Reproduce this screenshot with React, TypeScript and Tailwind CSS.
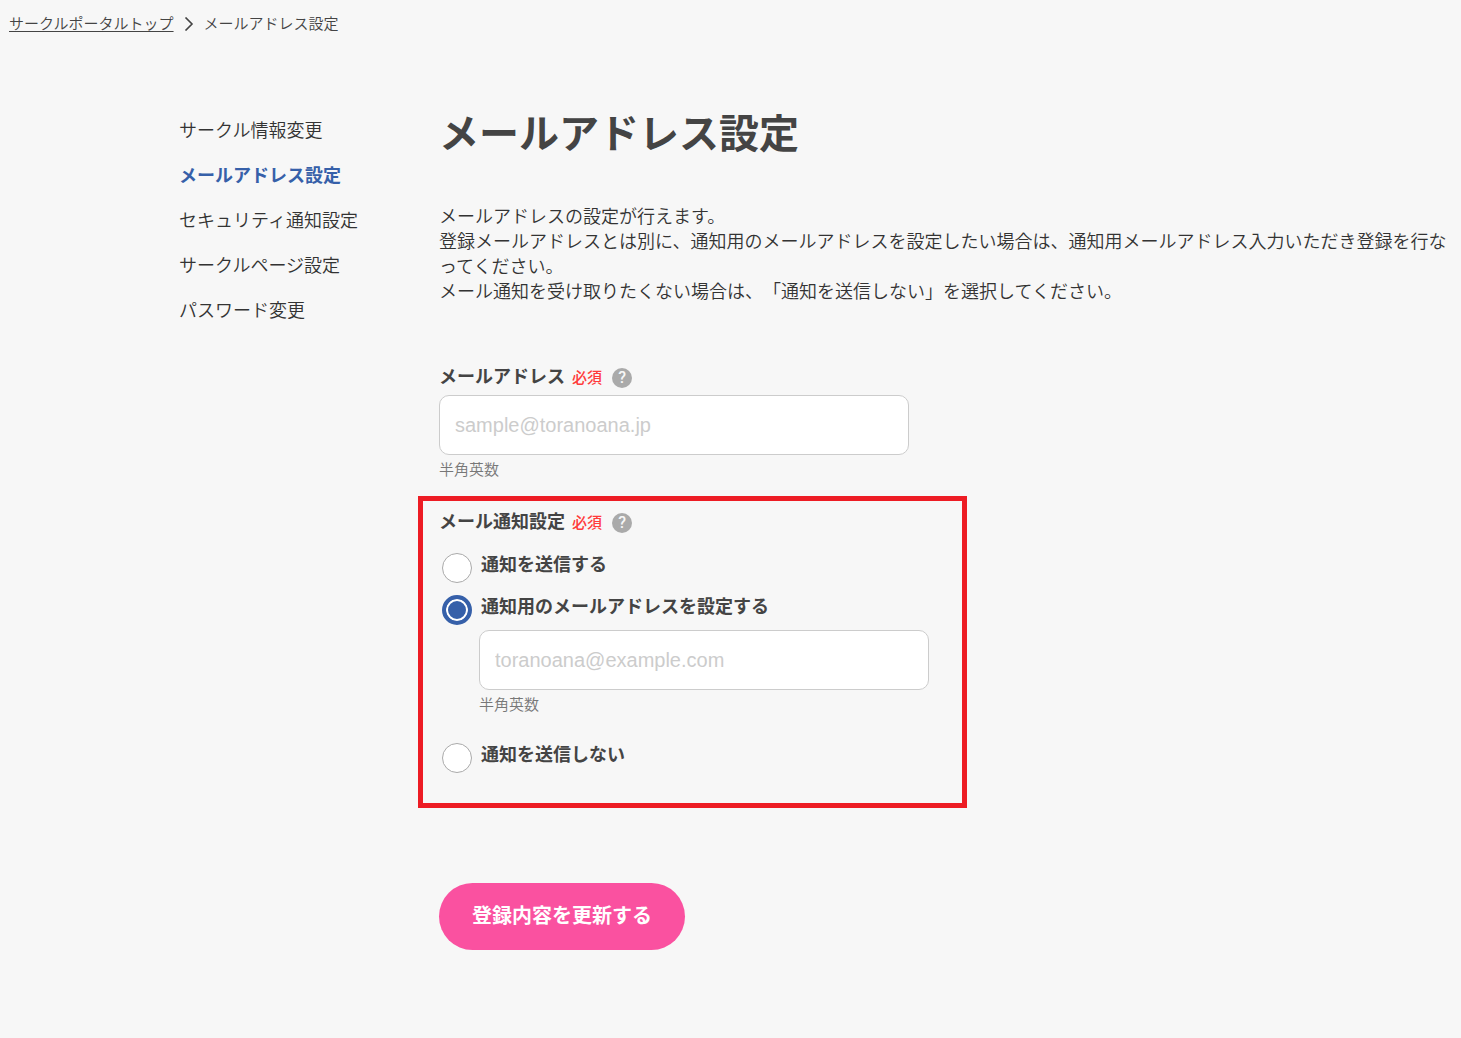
import { useId, useState } from 'react';
import type { ReactNode } from 'react';
import { clsx } from 'clsx';

const MENU_ITEMS = [
  'サークル情報変更',
  'メールアドレス設定',
  'セキュリティ通知設定',
  'サークルページ設定',
  'パスワード変更',
];

type NotifyMode = 'send' | 'custom' | 'none';

function Breadcrumb() {
  return (
    <nav aria-label="パンくずリスト" className="flex items-center px-[9px] pt-2 text-[15px] leading-[30px] text-[#444]">
      <a href="#top" className="underline underline-offset-2">サークルポータルトップ</a>
      <svg className="mx-[10px] mt-0.5" width="10" height="14" viewBox="0 0 10 14" fill="none" stroke="#444" strokeWidth="1.6" aria-hidden="true">
        <path d="M1.5 0.5 L8 7 L1.5 13.5" />
      </svg>
      <span>メールアドレス設定</span>
    </nav>
  );
}

function SideMenu({ current }: { current: string }) {
  return (
    <nav aria-label="設定メニュー" className="w-[260px] shrink-0 pt-[7px]">
      <ul>
        {MENU_ITEMS.map(item => (
          <li key={item} className="h-[45px] text-[18px] leading-[45px]">
            <a href="#menu" className={clsx(item === current && 'font-bold text-[#3660a9]')}>{item}</a>
          </li>
        ))}
      </ul>
    </nav>
  );
}

function FieldHeading({ children }: { children: ReactNode }) {
  return (
    <div className="flex h-8 items-center">
      <span className="pb-0.5 text-[18px] font-bold leading-[30px] text-[#444]">{children}</span>
      <span className="ml-[7px] pt-0.5 text-[15px] font-medium text-[#ff3b3b]">必須</span>
      <button type="button" aria-label="ヘルプ" className="ml-[10px] mt-1 flex size-5 items-center justify-center rounded-full bg-[#aaa] font-['Roboto',sans-serif] text-[16px] font-medium leading-5 text-[#f7f7f7]">
        ?
      </button>
    </div>
  );
}

interface MailInputProps {
  id: string;
  label?: string;
  placeholder: string;
}

function MailInput({ id, label, placeholder }: MailInputProps) {
  const [value, setValue] = useState('');

  return (
    <div>
      <input
        id={id}
        type="email"
        aria-label={label}
        aria-describedby={`${id}-note`}
        placeholder={placeholder}
        value={value}
        onChange={e => setValue(e.target.value)}
        className="block h-[60px] w-full rounded-[10px] border border-[#ccc] bg-white px-[15px] font-['Liberation_Sans',sans-serif] text-[20px] font-normal text-[#444] placeholder:text-[#ccc]"
      />
      <p id={`${id}-note`} className="h-7 text-[15px] leading-7 text-[#777]">半角英数</p>
    </div>
  );
}

interface NotifyRadioProps {
  value: NotifyMode;
  selected: NotifyMode;
  onSelect: (value: NotifyMode) => void;
  children: ReactNode;
}

function NotifyRadio({ value, selected, onSelect, children }: NotifyRadioProps) {
  return (
    <label className="flex h-[30px] items-start gap-[9px] pl-[3px]">
      <input
        type="radio"
        name="notify"
        value={value}
        checked={selected === value}
        onChange={() => onSelect(value)}
        className="size-[30px] shrink-0 appearance-none rounded-full border border-[#aaa] bg-white checked:border-4 checked:border-[#3660a9] checked:bg-[#3660a9] checked:shadow-[inset_0_0_0_2px_#fff]"
      />
      <span className="text-[18px] font-bold leading-5 text-[#444]">{children}</span>
    </label>
  );
}

export default function App() {
  const [mode, setMode] = useState<NotifyMode>('custom');
  const mailId = useId();
  const notifyMailId = useId();
  const headingId = useId();

  return (
    <div lang="ja" className="min-h-screen bg-[#f7f7f7] font-['Noto_Sans_CJK_JP',sans-serif] font-[350] text-[#333] [text-spacing-trim:space-all]">
      <Breadcrumb />

      <div className="flex pl-[179px] pr-2 pt-[62px]">
        <SideMenu current="メールアドレス設定" />

        <main className="min-w-0 flex-1 pb-[88px]">
          <h1 className="text-[40px] font-bold leading-[62px] text-[#444]">メールアドレス設定</h1>

          <p className="mt-[41px] text-[18px] leading-[25px] [line-break:normal]">
            メールアドレスの設定が行えます。<br />
            登録メールアドレスとは別に、通知用のメールアドレスを設定したい場合は、通知用メールアドレス入力いただき登録を行なってください。<br />
            メール通知を受け取りたくない場合は、「通知を送信しない」を選択してください。
          </p>

          <form className="mt-[57px]" onSubmit={e => e.preventDefault()}>
            <div className="max-w-[470px]">
              <FieldHeading>
                <label htmlFor={mailId}>メールアドレス</label>
              </FieldHeading>
              <div className="mt-[3px]">
                <MailInput id={mailId} placeholder="sample@toranoana.jp" />
              </div>
            </div>

            {/* Notification settings */}
            <div
              role="radiogroup"
              aria-labelledby={headingId}
              className="-ml-[21px] mt-[13px] max-w-[549px] border-[5px] border-[#ed1c24] pb-[30px] pl-4 pr-[33px] pt-1"
            >
              <FieldHeading>
                <span id={headingId}>メール通知設定</span>
              </FieldHeading>
              <div className="mt-4 space-y-3">
                <NotifyRadio value="send" selected={mode} onSelect={setMode}>通知を送信する</NotifyRadio>
                <NotifyRadio value="custom" selected={mode} onSelect={setMode}>通知用のメールアドレスを設定する</NotifyRadio>
              </div>
              <div className="mb-[25px] ml-10 mt-[5px]">
                <MailInput id={notifyMailId} label="通知用メールアドレス" placeholder="toranoana@example.com" />
              </div>
              <NotifyRadio value="none" selected={mode} onSelect={setMode}>通知を送信しない</NotifyRadio>
            </div>

            <button type="submit" className="mt-[75px] h-[67px] rounded-full bg-[#fa51a0] px-[33px] pb-1 text-[20px] font-bold text-white">
              登録内容を更新する
            </button>
          </form>
        </main>
      </div>
    </div>
  );
}
